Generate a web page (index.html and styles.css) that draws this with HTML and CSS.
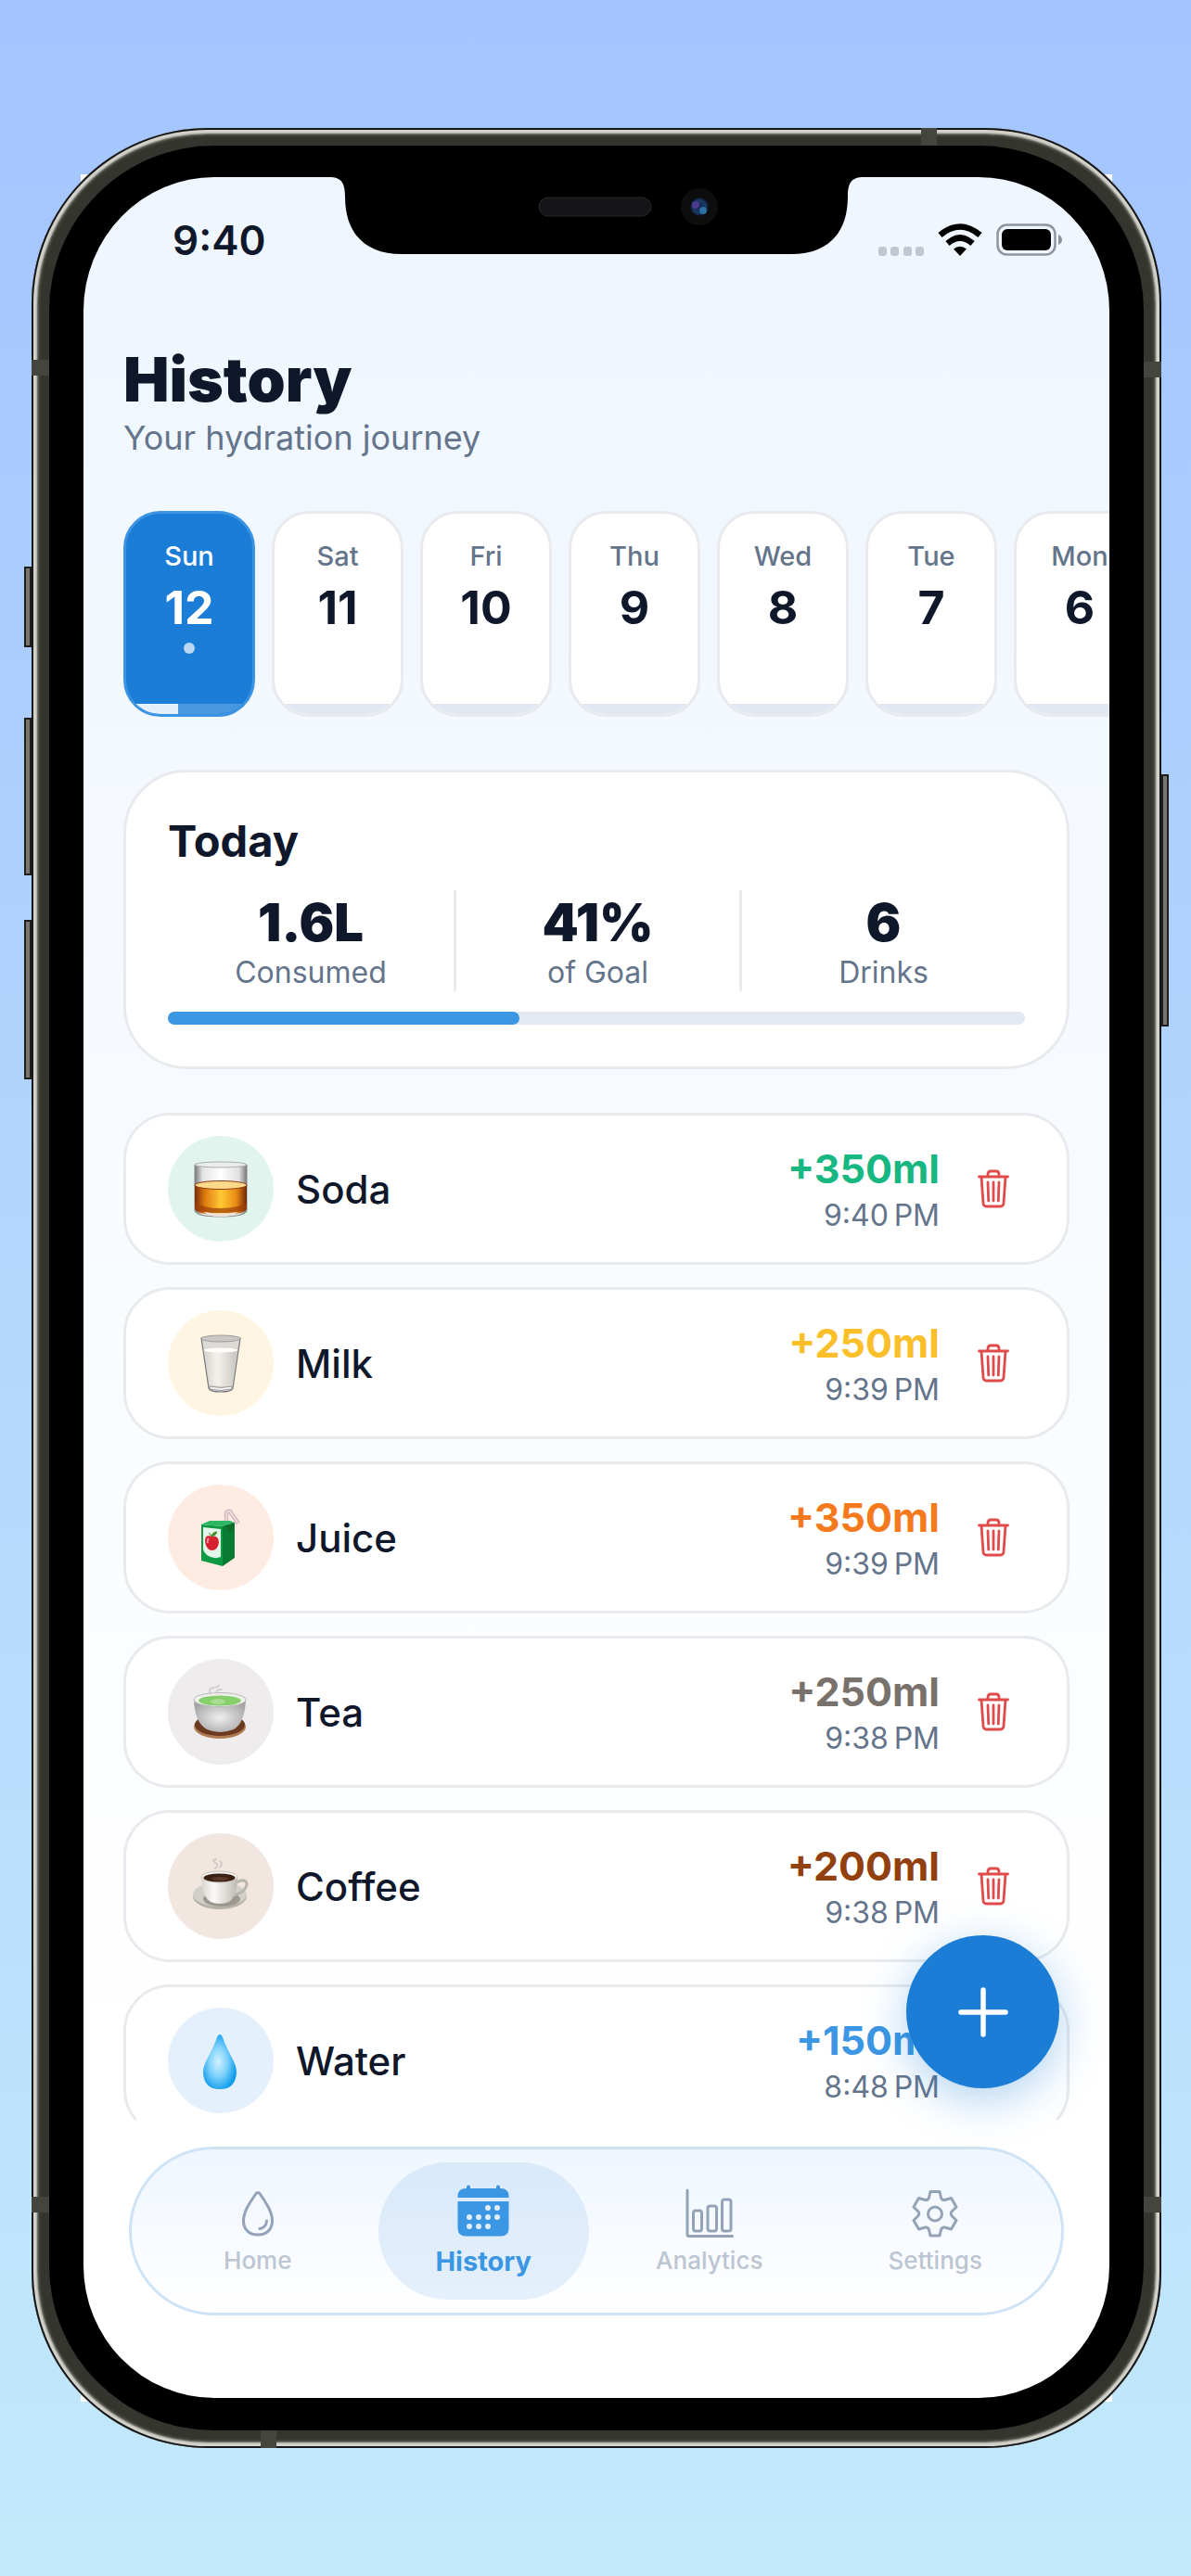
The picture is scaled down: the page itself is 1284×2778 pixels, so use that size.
FILE: index.html
```html
<!DOCTYPE html>
<html lang="en">
<head>
    <meta charset="utf-8">
    <title>History</title>
    <meta name="viewport" content="width=device-width, initial-scale=1">
    <link rel="stylesheet" href="styles.css">
</head>
<body>
    <!-- shared icons -->
    <svg class="defs" aria-hidden="true">
        <symbol id="trash" viewBox="0 0 34 42">
            <g fill="none" stroke="currentColor" stroke-width="2.8" stroke-linecap="round" stroke-linejoin="round">
                <path d="M1.5 8h31M11 8V5.5Q11 2 14 2h6Q23 2 23 5.500V8M4 8l2 28.500Q6.300 40 9.500 40h15Q27.700 40 28 36.500L30 8"/>
                <path d="M11 14l.7 20M17 14v20M23 14l-.7 20"/>
            </g>
        </symbol>
    </svg>

    <div class="phone">
        <span class="side-button action"></span>
        <span class="side-button volume-up"></span>
        <span class="side-button volume-down"></span>
        <span class="side-button power"></span>
        <span class="band band-top"></span>
        <span class="band band-bottom"></span>
        <span class="band band-left"></span>
        <span class="band band-right"></span>
        <span class="band band-left low"></span>
        <span class="band band-right low"></span>

        <div class="screen">
            <svg class="notch" viewBox="0 0 576 84" aria-hidden="true">
                <defs>
                    <radialGradient id="lens" cx=".5" cy=".5" r=".5">
                        <stop offset="0" stop-color="#14224a"/>
                        <stop offset=".7" stop-color="#1b3a66"/>
                        <stop offset="1" stop-color="#0b1226"/>
                    </radialGradient>
                </defs>
                <path d="M0 0H576V1C564 1 559 6 559 22C559 62 537 84 498 84H78C39 84 17 62 17 22C17 6 12 1 0 1Z" fill="#000"/>
                <rect x="226" y="23" width="121" height="20" rx="10" fill="#151416" stroke="#29282a" stroke-width="1"/>
                <circle cx="399" cy="33" r="20" fill="#0d0d0e"/>
                <circle cx="399" cy="33" r="10" fill="url(#lens)"/>
                <circle cx="395" cy="31" r="4" fill="#4a3a8c"/>
                <circle cx="403" cy="37" r="4" fill="#2b6f9c"/>
            </svg>

            <div class="status-bar">
                <span class="clock">9:40</span>
                <div class="status-icons">
                    <svg class="cell" viewBox="0 0 49 10" fill="#c2c6d0">
                        <rect x="0" width="9" height="10" rx="3"/>
                        <rect x="13" width="9" height="10" rx="3"/>
                        <rect x="27" width="9" height="10" rx="3"/>
                        <rect x="40" width="9" height="10" rx="3"/>
                    </svg>
                    <svg class="wifi" viewBox="0 0 48 35">
                        <g fill="none" stroke="#000" stroke-width="6.500">
                            <path d="M2.500 12.500Q24-5.500 45.500 12.500"/>
                            <path d="M10.500 21.500Q24 9.500 37.500 21.500"/>
                        </g>
                        <path d="M24 35L17 27.500Q24 22 31 27.500Z"/>
                    </svg>
                    <svg class="battery" viewBox="0 0 72 35">
                        <rect x="1.500" y="1.500" width="62" height="32" rx="10" fill="none" stroke="#9095a0" stroke-width="2.500"/>
                        <rect x="6" y="6" width="53" height="23" rx="6"/>
                        <path d="M67 12Q71 14 71 17.500Q71 21 67 23Z" fill="#8b909a"/>
                    </svg>
                </div>
            </div>

            <header class="page-header">
                <h1>History</h1>
                <p>Your hydration journey</p>
            </header>

            <div class="days">
                <button class="day selected">
                    <span class="name">Sun</span>
                    <span class="number">12</span>
                    <span class="dot"></span>
                    <span class="strip"><span class="fill" style="width: 41%"></span></span>
                </button>
                <button class="day"><span class="name">Sat</span><span class="number">11</span><span class="strip"></span></button>
                <button class="day"><span class="name">Fri</span><span class="number">10</span><span class="strip"></span></button>
                <button class="day"><span class="name">Thu</span><span class="number">9</span><span class="strip"></span></button>
                <button class="day"><span class="name">Wed</span><span class="number">8</span><span class="strip"></span></button>
                <button class="day"><span class="name">Tue</span><span class="number">7</span><span class="strip"></span></button>
                <button class="day"><span class="name">Mon</span><span class="number">6</span><span class="strip"></span></button>
            </div>

            <section class="summary">
                <h2>Today</h2>
                <div class="stats">
                    <div class="stat"><strong>1.6L</strong><span>Consumed</span></div>
                    <div class="stat"><strong>41%</strong><span>of Goal</span></div>
                    <div class="stat"><strong>6</strong><span>Drinks</span></div>
                </div>
                <div class="progress"><div class="fill" style="width: 41%"></div></div>
            </section>

            <ul class="drinks">
                <li class="drink soda">
                    <span class="badge">
                        <svg viewBox="0 0 64 64">
                            <defs>
                                <linearGradient id="whisky" x1="0" x2="1" y1="0" y2="0">
                                    <stop offset="0" stop-color="#7a2c08"/>
                                    <stop offset=".2" stop-color="#e07c10"/>
                                    <stop offset=".5" stop-color="#ffc935"/>
                                    <stop offset=".8" stop-color="#e98a14"/>
                                    <stop offset="1" stop-color="#6e2606"/>
                                </linearGradient>
                                <linearGradient id="glass" x1="0" x2="1" y1="0" y2="0">
                                    <stop offset="0" stop-color="#777"/>
                                    <stop offset=".15" stop-color="#e4e4e4"/>
                                    <stop offset=".5" stop-color="#fff"/>
                                    <stop offset=".85" stop-color="#e0e0e0"/>
                                    <stop offset="1" stop-color="#777"/>
                                </linearGradient>
                            </defs>
                            <path d="M4 6V55Q4 62 32 62Q60 62 60 55V6Z" fill="url(#glass)" stroke="#8b8583" stroke-width="1"/>
                            <ellipse cx="32" cy="6" rx="28" ry="3" fill="#e9eeec" stroke="#a9aeac" stroke-width="1"/>
                            <path d="M4 28V53Q5 60 32 60Q59 60 60 53V28Z" fill="url(#whisky)"/>
                            <ellipse cx="32" cy="28" rx="28" ry="4.500" fill="#ffd98a" stroke="#8a3a10" stroke-width="1"/>
                            <path d="M4 47Q14 53 32 53T60 47V53Q56 58 32 58T4 53Z" fill="#9c3f06" opacity=".7"/>
                            <path d="M14 57Q32 60 50 57Q46 62 32 62T14 57Z" fill="#efe4dc"/>
                        </svg>
                    </span>
                    <span class="title">Soda</span>
                    <span class="detail"><b>+350ml</b><time>9:40&#8239;PM</time></span>
                    <button class="delete" aria-label="Delete Soda"><svg><use href="#trash"/></svg></button>
                </li>
                <li class="drink milk">
                    <span class="badge">
                        <svg viewBox="0 0 64 64">
                            <defs>
                                <linearGradient id="milk" x1="0" x2="1" y1="0" y2="0">
                                    <stop offset="0" stop-color="#d4d2cc"/>
                                    <stop offset=".4" stop-color="#f4f2ec"/>
                                    <stop offset="1" stop-color="#c6c4be"/>
                                </linearGradient>
                            </defs>
                            <path d="M11 5L19 59Q20 63 32 63T45 59L53 5Z" fill="#dcdad5" stroke="#77767a" stroke-width="1.200"/>
                            <ellipse cx="32" cy="5.500" rx="21" ry="3.500" fill="#c9c8c4" stroke="#9d9c99" stroke-width="1"/>
                            <path d="M14 18L20 55Q32 58 44 55L50 18Z" fill="url(#milk)"/>
                            <ellipse cx="32" cy="18" rx="18" ry="2.500" fill="#fffefa"/>
                            <path d="M20 57Q32 60 44 57L44 60Q32 63 20 60Z" fill="#f3f2ef" stroke="#8b8a88" stroke-width=".8"/>
                        </svg>
                    </span>
                    <span class="title">Milk</span>
                    <span class="detail"><b>+250ml</b><time>9:39&#8239;PM</time></span>
                    <button class="delete" aria-label="Delete Milk"><svg><use href="#trash"/></svg></button>
                </li>
                <li class="drink juice">
                    <span class="badge">
                        <svg viewBox="0 0 64 64">
                            <path d="M38 18V7Q38 3 42 4L51 17" fill="none" stroke="#d3b7bb" stroke-width="4.500" stroke-linejoin="round"/>
                            <path d="M38 18V7Q38 3 42 4L51 17" fill="none" stroke="#efe2e3" stroke-width="1.500"/>
                            <path d="M11 18L34 20V63L11 57Z" fill="#0d9a43"/>
                            <path d="M34 20L47 16V54L34 63Z" fill="#087a32"/>
                            <path d="M11 18L20 14H42L47 16L34 20Z" fill="#2cb865"/>
                            <path d="M34 20L47 16L46 23L41 27L38 20Z" fill="#0b6b2d"/>
                            <path d="M13 21L32 23V53Q24 56 17 51Q13 47 13 44Z" fill="#e4f6ea"/>
                            <path d="M22 31Q15 28 15 36Q16 45 22 46Q29 46 30 37Q29 29 22 31Z" fill="#d8202f"/>
                            <path d="M19 33Q17 35 18 38" fill="none" stroke="#f58f92" stroke-width="2"/>
                            <path d="M22 31Q23 26 28 26Q27 30 22 31Q21 28 19 27" fill="#46902c" stroke="#46902c" stroke-width="1"/>
                        </svg>
                    </span>
                    <span class="title">Juice</span>
                    <span class="detail"><b>+350ml</b><time>9:39&#8239;PM</time></span>
                    <button class="delete" aria-label="Delete Juice"><svg><use href="#trash"/></svg></button>
                </li>
                <li class="drink tea">
                    <span class="badge">
                        <svg viewBox="0 0 64 64">
                            <defs>
                                <radialGradient id="bowl" cx=".5" cy=".55" r=".6">
                                    <stop offset="0" stop-color="#efefef"/>
                                    <stop offset="1" stop-color="#a3a2a3"/>
                                </radialGradient>
                            </defs>
                            <ellipse cx="31" cy="48" rx="28" ry="13" fill="#b07a50"/>
                            <ellipse cx="31" cy="46" rx="27" ry="12" fill="#6b3a20"/>
                            <path d="M3 19Q4 44 17 51Q31 57 46 51Q58 44 59 19Z" fill="url(#bowl)"/>
                            <ellipse cx="31" cy="19" rx="28" ry="7.500" fill="#f0f0ee" stroke="#b8b8b6" stroke-width="1"/>
                            <ellipse cx="31" cy="20" rx="23" ry="5.500" fill="#86cf6a"/>
                            <ellipse cx="29" cy="21" rx="8" ry="3" fill="#a9df92"/>
                            <path d="M21 12Q18 7 24 6T30 4M28 12Q26 8 33 8" fill="none" stroke="#d2d0d0" stroke-width="2" stroke-linecap="round"/>
                        </svg>
                    </span>
                    <span class="title">Tea</span>
                    <span class="detail"><b>+250ml</b><time>9:38&#8239;PM</time></span>
                    <button class="delete" aria-label="Delete Tea"><svg><use href="#trash"/></svg></button>
                </li>
                <li class="drink coffee">
                    <span class="badge">
                        <svg viewBox="0 0 64 64">
                            <defs>
                                <linearGradient id="cup" x1="0" x2="1" y1="0" y2="0">
                                    <stop offset="0" stop-color="#d8d6d0"/>
                                    <stop offset=".35" stop-color="#fbfaf7"/>
                                    <stop offset="1" stop-color="#bdbab2"/>
                                </linearGradient>
                            </defs>
                            <ellipse cx="31" cy="43" rx="29" ry="14" fill="#b5b1a9"/>
                            <ellipse cx="31" cy="41" rx="29" ry="13" fill="#d3d0c9"/>
                            <ellipse cx="33" cy="46" rx="20" ry="8" fill="#9c9890"/>
                            <path d="M49 28Q58 23 60 29Q60 38 46 42" fill="none" stroke="#b9b6ae" stroke-width="3"/>
                            <path d="M11 22Q11 43 21 49Q31 53 41 49Q50 43 50 22Z" fill="url(#cup)"/>
                            <ellipse cx="30.500" cy="22" rx="19.500" ry="6" fill="#f5f3ef" stroke="#c6c2bb" stroke-width="1"/>
                            <ellipse cx="30.500" cy="23" rx="17" ry="4.500" fill="#3b2014"/>
                            <ellipse cx="31" cy="24" rx="9" ry="2" fill="#5b3927"/>
                            <path d="M26 13Q31 9 25 6Q22 4 27 3M31 12Q35 8 31 5" fill="none" stroke="#cfc8c5" stroke-width="1.800" stroke-linecap="round"/>
                        </svg>
                    </span>
                    <span class="title">Coffee</span>
                    <span class="detail"><b>+200ml</b><time>9:38&#8239;PM</time></span>
                    <button class="delete" aria-label="Delete Coffee"><svg><use href="#trash"/></svg></button>
                </li>
                <li class="drink water">
                    <span class="badge">
                        <svg viewBox="0 0 64 64">
                            <defs>
                                <radialGradient id="drop" cx=".45" cy=".5" r=".55">
                                    <stop offset="0" stop-color="#d3f1ff"/>
                                    <stop offset=".5" stop-color="#7fd2fb"/>
                                    <stop offset="1" stop-color="#0f9cec"/>
                                </radialGradient>
                            </defs>
                            <path d="M31 4Q33 4 34 7Q37 16 44 29Q49 38 49 45Q48 63 31 63T13 45Q13 38 18 29Q25 16 28 7Q29 4 31 4Z" fill="url(#drop)"/>
                        </svg>
                    </span>
                    <span class="title">Water</span>
                    <span class="detail"><b>+150ml</b><time>8:48&#8239;PM</time></span>
                    <button class="delete" aria-label="Delete Water"><svg><use href="#trash"/></svg></button>
                </li>
            </ul>

            <button class="add" aria-label="Add drink">
                <svg viewBox="0 0 54 54"><path d="M27 3V51M3 27H51" stroke="#fff" stroke-width="5.500" stroke-linecap="round"/></svg>
            </button>

            <nav class="tabs">
                <a href="#home" class="tab">
                    <svg viewBox="0 0 56 56" fill="none" stroke="currentColor" stroke-width="3" stroke-linecap="round" stroke-linejoin="round">
                        <path d="M28 5.500Q26.500 5.500 25 8C19 17 12.500 26 12.500 36C12.500 45.500 19 51 28 51S43.500 45.500 43.500 36C43.500 26 37 17 31 8Q29.500 5.500 28 5.500Z"/>
                        <path d="M37.500 36Q37 43 30 44.500"/>
                    </svg>
                    <span>Home</span>
                </a>
                <a href="#history" class="tab active">
                    <svg viewBox="0 0 56 56" fill="currentColor">
                        <path d="M.5 14V12.500Q.5 4 9 4H10V2.500Q10 .5 12 .5T14 2.500V4H42V2.500Q42 .5 44 .5T46 2.500V4H47Q55.500 4 55.500 12.500V14Z"/>
                        <path d="M.5 18H55.500V47Q55.500 55.500 47 55.500H9Q.5 55.500 .5 47Z"/>
                        <g fill="#dfedfa">
                            <circle cx="33" cy="25" r="3"/><circle cx="43" cy="25" r="3"/>
                            <circle cx="13" cy="35" r="3"/><circle cx="23" cy="35" r="3"/><circle cx="33" cy="35" r="3"/><circle cx="43" cy="35" r="3"/>
                            <circle cx="13" cy="45" r="3"/><circle cx="23" cy="45" r="3"/><circle cx="33" cy="45" r="3"/>
                        </g>
                    </svg>
                    <span>History</span>
                </a>
                <a href="#analytics" class="tab">
                    <svg viewBox="0 0 56 56" fill="none" stroke="currentColor" stroke-width="3" stroke-linecap="round" stroke-linejoin="round">
                        <path d="M4 3V51Q4 52.500 5.500 52.500H52.500"/>
                        <rect x="10.500" y="25" width="9" height="22" rx="2.500"/>
                        <rect x="26" y="20" width="9.500" height="27" rx="2.500"/>
                        <rect x="41.500" y="13" width="9.500" height="34" rx="2.500"/>
                    </svg>
                    <span>Analytics</span>
                </a>
                <a href="#settings" class="tab">
                    <svg viewBox="0 0 56 56" fill="none" stroke="currentColor" stroke-width="3" stroke-linejoin="round">
                        <path d="M23 4.500H33L34.500 11Q35.500 14 38.500 13.500L45.500 11.500L51 21L46 26Q44.500 28 46 30.500L51 35.500L45.500 45L38.500 43Q35.500 42.500 34.500 45.500L33 52H23L21.500 45.500Q20.500 42.500 17.500 43L10.500 45L5 35.500L10 30.500Q11.500 28 10 26L5 21L10.500 11.500L17.500 13.500Q20.500 14 21.500 11Z"/>
                        <circle cx="28" cy="28.500" r="7.500"/>
                    </svg>
                    <span>Settings</span>
                </a>
            </nav>
        </div>
    </div>
</body>
</html>
```
FILE: styles.css
```css
* {
    box-sizing: border-box;
}
body {
    margin: 0;
    height: 100vh;
    display: flex;
    padding: 138px 32px 138px 34px;
    background: linear-gradient(#a3c4ff, #c3e9fb);
    font-family: Inter, "Liberation Sans", sans-serif;
    color: #0f172a;
}
h1, h2, p, ul {
    margin: 0;
    padding: 0;
}
button {
    font: inherit;
    color: inherit;
    padding: 0;
    border: none;
    background: none;
    cursor: pointer;
}
.defs {
    position: absolute;
    width: 0;
    height: 0;
}

/* device frame */
.phone {
    position: relative;
    flex: 1;
    min-width: 0;
    display: flex;
    padding: 19px;
    border-radius: 190px;
    background: #35352f;
    box-shadow: inset 0 0 0 2px #14161a, inset 0 0 2px 6px #d3d3cb, inset 0 0 3px 8px #55554e;
}
.phone::before {
    content: "";
    position: absolute;
    inset: 50px 53px;
    z-index: -1;
    background: #fff;
}
.side-button {
    position: absolute;
    width: 8px;
    background: #77756c;
    border: 2px solid #1f1f1d;
}
.action {
    left: -8px;
    top: 473px;
    height: 87px;
}
.volume-up {
    left: -8px;
    top: 636px;
    height: 170px;
}
.volume-down {
    left: -8px;
    top: 854px;
    height: 172px;
}
.power {
    right: -8px;
    top: 697px;
    height: 272px;
}
.band {
    position: absolute;
    width: 19px;
    height: 17px;
    background: #45453f;
}
.band-top {
    top: 0;
    right: 242px;
    width: 17px;
    height: 19px;
}
.band-bottom {
    bottom: 0;
    left: 247px;
    width: 17px;
    height: 19px;
}
.band-left {
    left: 0;
    top: 250px;
}
.band-right {
    right: 0;
    top: 252px;
}
.band.low {
    top: auto;
    bottom: 254px;
}

.screen {
    position: relative;
    flex: 1;
    min-width: 0;
    display: flex;
    flex-direction: column;
    overflow: hidden;
    border: solid #000;
    border-width: 34px 37px 35px 37px;
    border-radius: 178px;
    background: linear-gradient(#eff6ff, #fff 85%) #fff;
}
.notch {
    position: absolute;
    top: -1px;
    left: 50%;
    width: 576px;
    height: 84px;
    transform: translateX(-50%);
}
.status-bar {
    flex: none;
    height: 135px;
    padding: 0 50px 0 96px;
    display: flex;
    align-items: center;
    justify-content: space-between;
}
.clock {
    font-size: 44px;
    font-weight: 600;
}
.status-icons {
    display: flex;
    align-items: flex-end;
    gap: 15px;
}
.cell {
    width: 49px;
    height: 10px;
}
.wifi {
    width: 48px;
    height: 35px;
}
.battery {
    width: 72px;
    height: 35px;
}

.page-header {
    padding: 43px 43px 0;
}
h1 {
    font-size: 66px;
    line-height: 80px;
    font-weight: 900;
}
.page-header p {
    font-size: 36px;
    line-height: 46px;
    color: #64748b;
}

/* day picker */
.days {
    flex: none;
    display: flex;
    gap: 18px;
    margin-top: 56px;
    padding-left: 43px;
    overflow: hidden;
}
.day {
    position: relative;
    flex: none;
    width: 142px;
    height: 222px;
    padding-top: 29px;
    display: flex;
    flex-direction: column;
    align-items: center;
    gap: 8px;
    background: #fff;
    border: 3px solid #e8eaee;
    border-radius: 40px;
    overflow: hidden;
}
.day .name {
    font-size: 29px;
    line-height: 34px;
    font-weight: 500;
    color: #64748b;
}
.day .number {
    font-size: 50px;
    line-height: 60px;
    font-weight: 700;
}
.day .dot {
    width: 12px;
    height: 12px;
    border-radius: 50%;
    background: #bbd8f3;
}
.day .strip {
    width: 100%;
    height: 11px;
    margin-top: auto;
    background: #e2e8f2;
}
.day .fill {
    display: block;
    height: 100%;
    background: #e3f0fb;
}
.day.selected {
    color: #fff;
    background: #1b7dd5;
    border-color: #3b93e2;
}
.day.selected .name {
    color: #fff;
}
.day.selected .strip {
    background: #4997de;
}

/* summary card */
.summary {
    flex: none;
    margin: 57px 43px 0;
    padding: 45px;
    background: #fff;
    border: 3px solid #e8eaee;
    border-radius: 68px;
}
h2 {
    font-size: 47px;
    line-height: 58px;
    font-weight: 700;
}
.stats {
    display: grid;
    grid-template-columns: repeat(3, 1fr);
    margin: 24px 0 22px;
}
.stat {
    display: flex;
    flex-direction: column;
    align-items: center;
    padding-top: 1px;
}
.stat + .stat {
    border-left: 3px solid #e8eaee;
}
.stat strong {
    font-size: 56px;
    line-height: 68px;
    font-weight: 900;
}
.stat span {
    font-size: 32px;
    line-height: 40px;
    color: #64748b;
}
.progress {
    height: 14px;
    border-radius: 7px;
    background: #e2e9f3;
}
.progress .fill {
    height: 100%;
    border-radius: 7px;
    background: #3b96e3;
}

/* drinks */
.drinks {
    flex: 1;
    min-height: 0;
    margin: 47px 43px 0;
    overflow: hidden;
    list-style: none;
}
.drink {
    display: flex;
    align-items: center;
    height: 164px;
    margin-bottom: 24px;
    padding: 0 45px;
    background: #fff;
    border: 3px solid #e8eaee;
    border-radius: 50px;
}
.badge {
    display: flex;
    align-items: center;
    justify-content: center;
    width: 114px;
    height: 114px;
    border-radius: 50%;
}
.badge svg {
    width: 64px;
    height: 64px;
}
.title {
    flex: 1;
    margin-left: 24px;
    font-size: 42px;
    font-weight: 500;
}
.detail {
    display: flex;
    flex-direction: column;
    align-items: flex-end;
    gap: 6px;
}
.detail b {
    font-size: 43px;
    line-height: 51px;
    font-weight: 700;
}
.detail time {
    font-size: 32px;
    line-height: 38px;
    color: #64748b;
}
.delete {
    width: 68px;
    height: 68px;
    margin-left: 24px;
    color: #e04a4a;
}
.delete svg {
    display: block;
    width: 34px;
    height: 42px;
    margin: 0 auto;
}
.soda .badge { background: #e1f5ee; }
.soda b { color: #17b782; }
.milk .badge { background: #fff5e2; }
.milk b { color: #fbbf2a; }
.juice .badge { background: #feece2; }
.juice b { color: #f57a1e; }
.tea .badge { background: #eeecec; }
.tea b { color: #78716c; }
.coffee .badge { background: #f1e7e0; }
.coffee b { color: #92400e; }
.water .badge { background: #e4f1fc; }
.water b { color: #3b96e3; }

.add {
    position: absolute;
    right: 54px;
    bottom: 334px;
    width: 165px;
    height: 165px;
    border-radius: 50%;
    background: #1b7dd5;
    box-shadow: 0 12px 48px rgba(27, 125, 213, 0.35);
}
.add svg {
    display: block;
    width: 54px;
    height: 54px;
    margin: 0 auto;
}

/* tab bar */
.tabs {
    flex: none;
    display: flex;
    margin: 29px 49px 89px;
    padding: 14px;
    border: 3px solid #cfe3f6;
    border-radius: 91px;
    background: linear-gradient(#eff6ff, #fff);
}
.tab {
    flex: 1;
    height: 148px;
    margin: 0 8px;
    display: flex;
    flex-direction: column;
    align-items: center;
    justify-content: center;
    gap: 8px;
    border-radius: 74px;
    color: #94a3b8;
    text-decoration: none;
}
.tab svg {
    width: 56px;
    height: 56px;
}
.tab span {
    font-size: 26px;
    line-height: 30px;
    font-weight: 500;
    color: #bcc5d2;
}
.tab.active {
    gap: 10px;
    background: rgba(59, 150, 227, 0.13);
    color: #3b96e3;
}
.tab.active span {
    font-size: 29px;
    line-height: 34px;
    font-weight: 700;
    color: #3b96e3;
}
```
